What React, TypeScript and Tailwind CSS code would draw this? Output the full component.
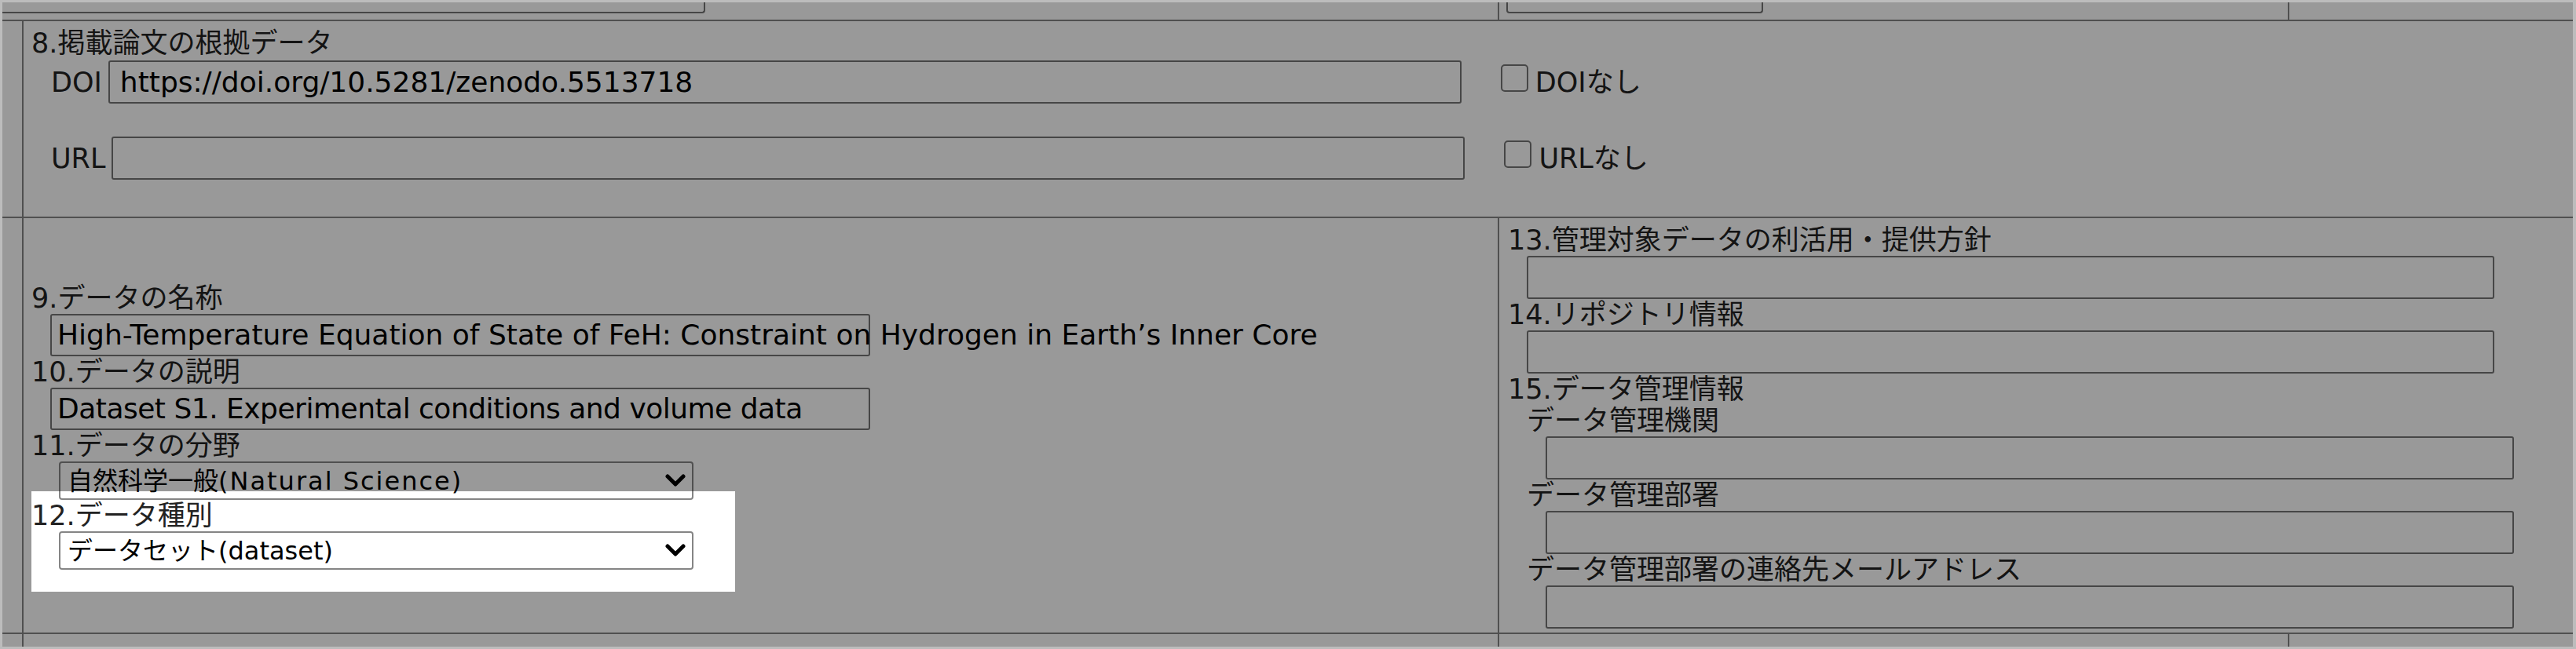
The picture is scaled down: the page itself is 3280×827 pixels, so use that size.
import React from 'react';

// Dataset metadata form: table rows 8–15, dimmed except the "12.データ種別" field.

function Chevron() {
  return (
    <svg width="26" height="17" viewBox="0 0 26 17" className="shrink-0">
      <polyline points="3,3 13,13 23,3" fill="none" stroke="#000" strokeWidth="5" strokeLinecap="round" strokeLinejoin="round" />
    </svg>
  );
}

function Label({ children, className = '' }: { children: React.ReactNode; className?: string }) {
  return <div className={`whitespace-nowrap text-[35px] leading-[40px] text-[#222] ${className}`}>{children}</div>;
}

function Box({ value, className = '' }: { value?: string; className?: string }) {
  return (
    <div className={`flex shrink-0 items-center whitespace-nowrap rounded-[3px] border-2 border-[#767676] bg-white text-[36px] text-black ${className}`}>
      {value}
    </div>
  );
}

function Select({ children }: { children: React.ReactNode }) {
  return (
    <div className="ml-[45px] flex h-[49px] w-[808px] items-center justify-between rounded-[4px] border-2 border-[#858585] bg-white pl-[9px] pr-[8px] text-[32px] text-black">
      <span className="whitespace-nowrap">{children}</span>
      <Chevron />
    </div>
  );
}

function Check({ label }: { label: string }) {
  return (
    <div className="ml-[50px] flex items-center">
      <span className="mb-[10px] h-[35px] w-[35px] rounded-[5px] border-2 border-[#767676] bg-white" />
      <span className="ml-[9px] text-[35px] leading-[40px] text-[#222]">{label}</span>
    </div>
  );
}

export default function App() {
  return (
    <div className="flex h-[827px] w-[3280px] border-[3px] border-r-[4px] border-[#bcbcbc] font-['DejaVu_Sans','Noto_Sans_CJK_JP',sans-serif]">
      <div className="relative h-[821px] flex-1 overflow-hidden">
        <div className="grid h-full grid-cols-[25px_1877px_1004px_1fr] grid-rows-[22px_249px_528px_16px] gap-[2px] bg-[#858585]">
          {/* previous row (cut off) */}
          <div className="col-span-2 bg-white">
            <div className="h-[14px] w-[895px] rounded-br-[4px] border-b-2 border-r-2 border-[#767676]" />
          </div>
          <div className="bg-white">
            <div className="ml-[9px] h-[14px] w-[327px] rounded-b-[4px] border-x-2 border-b-2 border-[#767676]" />
          </div>
          <div className="bg-white" />

          {/* 8 */}
          <div className="bg-white" />
          <div className="col-span-3 bg-white pt-[8px]">
            <Label className="pl-[10px]">8.掲載論文の根拠データ</Label>
            <div className="mt-[2px] flex items-center pl-[35px]">
              <span className="text-[35px] leading-[40px] text-[#222]">DOI</span>
              <Box className="ml-2 h-[55px] w-[1723px] pl-[13px]" value="https://doi.org/10.5281/zenodo.5513718" />
              <Check label="DOIなし" />
            </div>
            <div className="mt-[42px] flex items-center pl-[35px]">
              <span className="text-[35px] leading-[40px] text-[#222]">URL</span>
              <Box className="ml-2 h-[55px] w-[1723px]" />
              <Check label="URLなし" />
            </div>
          </div>

          {/* 9 - 15 */}
          <div className="bg-white" />
          <div className="bg-white pt-[82px]">
            <Label className="pl-[10px]">9.データの名称</Label>
            <Box
              className="ml-[34px] h-[54px] w-[1044px] pl-[7px]"
              value="High-Temperature Equation of State of FeH: Constraint on Hydrogen in Earth’s Inner Core"
            />
            <Label className="pl-[10px]">10.データの説明</Label>
            <Box
              className="ml-[34px] h-[54px] w-[1044px] pl-[7px] tracking-[-0.5px]"
              value="Dataset S1. Experimental conditions and volume data"
            />
            <Label className="pl-[10px]">11.データの分野</Label>
            <Select>
              自然科学一般<span className="tracking-[2px]">(Natural Science)</span>
            </Select>
            <Label className="pl-[10px]">12.データ種別</Label>
            <Select>データセット(dataset)</Select>
          </div>
          <div className="col-span-2 bg-white pt-[8px]">
            <Label className="pl-[11px] leading-[39px]">13.管理対象データの利活用・提供方針</Label>
            <Box className="ml-[35px] h-[55px] w-[1232px]" />
            <Label className="pl-[11px] leading-[39px]">14.リポジトリ情報</Label>
            <Box className="ml-[35px] h-[55px] w-[1232px]" />
            <Label className="pl-[11px] leading-[39px]">15.データ管理情報</Label>
            <Label className="pl-[35px] leading-[39px]">データ管理機関</Label>
            <Box className="ml-[59px] h-[55px] w-[1233px]" />
            <Label className="pl-[35px] leading-[39px]">データ管理部署</Label>
            <Box className="ml-[59px] h-[55px] w-[1233px]" />
            <Label className="pl-[35px] leading-[39px]">データ管理部署の連絡先メールアドレス</Label>
            <Box className="ml-[59px] h-[55px] w-[1233px]" />
          </div>

          {/* next row (cut off) */}
          <div className="bg-white" />
          <div className="bg-white" />
          <div className="bg-white" />
          <div className="bg-white" />
        </div>

        {/* dimming overlay with a cut-out around field 12 */}
        <div className="pointer-events-none absolute left-[37px] top-[623px] h-[128px] w-[896px] shadow-[0_0_0_4000px_rgba(0,0,0,0.4)]" />
      </div>
    </div>
  );
}
